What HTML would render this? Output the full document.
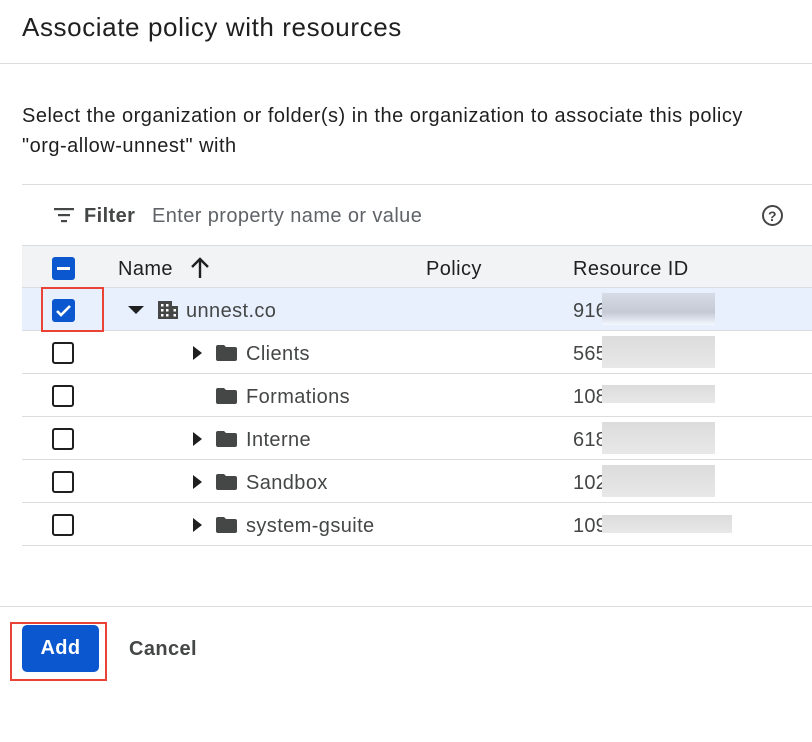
<!DOCTYPE html>
<html><head><style>
*{margin:0;padding:0;box-sizing:border-box}
body{width:812px;height:742px;background:#fff;font-family:"Liberation Sans",Arial,sans-serif;color:#1f1f1f;position:relative;overflow:hidden;letter-spacing:0.4px}
.a{position:absolute}
.row{position:absolute;left:22px;right:0;height:43px;border-bottom:1px solid #dadce0}
.cb{position:absolute;left:30px;top:11px;width:22px;height:22px;border:2px solid #1f1f1f;border-radius:3px}
.nm{position:absolute;top:12px;font-size:20px;color:#444746}
.id{position:absolute;left:551px;top:12px;font-size:20px;color:#444746;letter-spacing:0.2px}
.bl{position:absolute;left:580px;top:5px;height:32px;width:113px;background:linear-gradient(#dcdcdc,#e8e8e8)}
.fd{position:absolute;top:14px;width:21px;height:16px}
.tri{position:absolute;top:15px;width:0;height:0;border-top:7px solid transparent;border-bottom:7px solid transparent;border-left:9px solid #1f1f1f}
</style></head><body>
<div class="a" style="left:22px;top:12px;font-size:26px;letter-spacing:0.6px;color:#1f1f1f">Associate policy with resources</div>
<div class="a" style="left:0;right:0;top:63px;border-top:1px solid #dadce0"></div>
<div class="a" style="left:22px;top:101px;font-size:20px;line-height:30px;letter-spacing:0.5px;color:#1f1f1f">Select the organization or folder(s) in the organization to associate this policy<br>"org-allow-unnest" with</div>
<div class="a" style="left:22px;right:0;top:184px;border-top:1px solid #dadce0"></div>
<svg class="a" style="left:54px;top:207px" width="20" height="16"><rect x="0" y="1" width="20" height="2.2" fill="#444746"/><rect x="4" y="7" width="12" height="2.2" fill="#444746"/><rect x="7" y="13" width="6" height="2.2" fill="#444746"/></svg>
<div class="a" style="left:84px;top:205px;font-size:20px;font-weight:bold;color:#444746">Filter</div>
<div class="a" style="left:152px;top:205px;font-size:20px;color:#5f6368">Enter property name or value</div>
<svg class="a" style="left:761px;top:204px" width="23" height="23"><circle cx="11.5" cy="11.5" r="9.5" fill="none" stroke="#444746" stroke-width="2"/><text x="11.5" y="17" font-size="14" font-weight="bold" text-anchor="middle" fill="#444746" font-family="Liberation Sans">?</text></svg>
<div class="row" style="top:245px;background:#f1f3f4;border-top:1px solid #dadce0">
 <div class="a" style="left:30px;top:11px;width:23px;height:23px;background:#0b57d0;border-radius:3px"><div class="a" style="left:5px;top:10px;width:13px;height:3px;background:#fff"></div></div>
 <div class="nm" style="left:96px;color:#1f1f1f">Name</div>
 <svg class="a" style="left:168px;top:11px" width="20" height="22"><path d="M10 2v19M2 10l8-8 8 8" fill="none" stroke="#1f1f1f" stroke-width="2.4"/></svg>
 <div class="nm" style="left:404px;color:#1f1f1f">Policy</div>
 <div class="nm" style="left:551px;color:#1f1f1f">Resource ID</div>
</div>
<div class="row" style="top:288px;background:#e8f0fe">
 <div class="a" style="left:30px;top:11px;width:23px;height:23px;background:#0b57d0;border-radius:3px"><svg width="23" height="23"><path d="M5 12l4 4 9-9" fill="none" stroke="#fff" stroke-width="2.6"/></svg></div>
 <div class="a" style="left:106px;top:18px;border-left:8px solid transparent;border-right:8px solid transparent;border-top:8px solid #1f1f1f"></div>
 <svg class="a" style="left:136px;top:12px" width="20" height="20"><rect x="0" y="1" width="14" height="18" fill="#444746"/><rect x="14" y="6" width="6" height="13" fill="#444746"/><g fill="#fff"><rect x="3" y="4" width="2.5" height="2.5"/><rect x="8" y="4" width="2.5" height="2.5"/><rect x="3" y="9" width="2.5" height="2.5"/><rect x="8" y="9" width="2.5" height="2.5"/><rect x="3" y="14" width="2.5" height="2.5"/><rect x="8" y="14" width="2.5" height="2.5"/><rect x="15.5" y="9" width="2.5" height="2.5"/><rect x="15.5" y="14" width="2.5" height="2.5"/></g></svg>
 <div class="nm" style="left:164px">unnest.co</div>
 <div class="id">916</div><div class="bl" style="background:linear-gradient(#d8dce6,#c4c9d4 60%,#f4f8ff)"></div>
</div>

<div class="row" style="top:331px"><div class="cb"></div><div class="tri" style="left:171px"></div><svg class="fd" style="left:194px" viewBox="0 0 21 16"><path d="M0 2a2 2 0 012-2h6l2 2h9a2 2 0 012 2v10a2 2 0 01-2 2H2a2 2 0 01-2-2z" fill="#444746"/></svg><div class="nm" style="left:224px">Clients</div><div class="id">565</div><div class="bl"></div></div>
<div class="row" style="top:374px"><div class="cb"></div><svg class="fd" style="left:194px" viewBox="0 0 21 16"><path d="M0 2a2 2 0 012-2h6l2 2h9a2 2 0 012 2v10a2 2 0 01-2 2H2a2 2 0 01-2-2z" fill="#444746"/></svg><div class="nm" style="left:224px">Formations</div><div class="id">108</div><div class="bl" style="height:18px;top:11px"></div></div>
<div class="row" style="top:417px"><div class="cb"></div><div class="tri" style="left:171px"></div><svg class="fd" style="left:194px" viewBox="0 0 21 16"><path d="M0 2a2 2 0 012-2h6l2 2h9a2 2 0 012 2v10a2 2 0 01-2 2H2a2 2 0 01-2-2z" fill="#444746"/></svg><div class="nm" style="left:224px">Interne</div><div class="id">618</div><div class="bl"></div></div>
<div class="row" style="top:460px"><div class="cb"></div><div class="tri" style="left:171px"></div><svg class="fd" style="left:194px" viewBox="0 0 21 16"><path d="M0 2a2 2 0 012-2h6l2 2h9a2 2 0 012 2v10a2 2 0 01-2 2H2a2 2 0 01-2-2z" fill="#444746"/></svg><div class="nm" style="left:224px">Sandbox</div><div class="id">102</div><div class="bl"></div></div>
<div class="row" style="top:503px"><div class="cb"></div><div class="tri" style="left:171px"></div><svg class="fd" style="left:194px" viewBox="0 0 21 16"><path d="M0 2a2 2 0 012-2h6l2 2h9a2 2 0 012 2v10a2 2 0 01-2 2H2a2 2 0 01-2-2z" fill="#444746"/></svg><div class="nm" style="left:224px">system-gsuite</div><div class="id">109</div><div class="bl" style="width:130px;height:18px;top:12px"></div></div>
<div class="a" style="left:41px;top:287px;width:63px;height:45px;border:2px solid #ea4335"></div>

<div class="a" style="left:0;right:0;top:606px;border-top:1px solid #dadce0"></div>
<div class="a" style="left:22px;top:625px;width:77px;height:47px;background:#0b57d0;border-radius:5px;color:#fff;font-size:20px;font-weight:bold;text-align:center;line-height:47px">Add</div>
<div class="a" style="left:10px;top:622px;width:97px;height:59px;border:2px solid #ea4335"></div>
<div class="a" style="left:129px;top:638px;font-size:20px;font-weight:bold;color:#444746">Cancel</div>
</body></html>
